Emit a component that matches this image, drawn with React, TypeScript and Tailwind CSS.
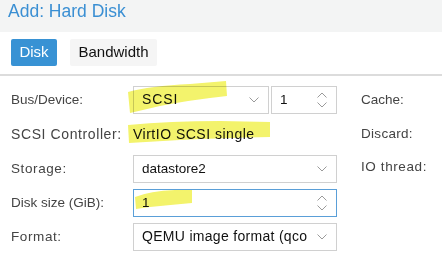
import React from 'react';

const font = { fontFamily: '"Liberation Sans", Arial, sans-serif' };

function Chevron({ up = false }: { up?: boolean }) {
  return (
    <svg width="10" height="6" viewBox="0 0 10 6" className="block shrink-0">
      <path
        d={up ? 'M0.5 5.5 L5 1 L9.5 5.5' : 'M0.5 0.5 L5 5 L9.5 0.5'}
        fill="none"
        stroke="#9a9a9a"
        strokeWidth="1"
      />
    </svg>
  );
}

function Spinner() {
  return (
    <div className="flex shrink-0 flex-col gap-[4px]">
      <Chevron up />
      <Chevron />
    </div>
  );
}

function Label({ children, className = '' }: { children: React.ReactNode; className?: string }) {
  return <div className={`w-[122px] shrink-0 whitespace-nowrap text-[13.5px] text-[#444] ${className}`}>{children}</div>;
}

function Field({
  children,
  width,
  focused = false,
  icon,
}: {
  children?: React.ReactNode;
  width: string;
  focused?: boolean;
  icon: React.ReactNode;
}) {
  return (
    <div
      className={`flex h-full items-center border bg-white pl-[8px] pr-[9px] text-[13.5px] text-[#111] ${width} ${
        focused ? 'border-[#5a9fd8]' : 'border-[#d0d0d0]'
      }`}
    >
      <div className="mr-[10px] min-w-0 flex-1 overflow-hidden whitespace-nowrap">{children}</div>
      {icon}
    </div>
  );
}

export default function App() {
  return (
    <div className="relative h-[255px] w-[442px] overflow-hidden bg-white" style={font}>
      <div className="h-[32px] bg-[#f3f4f4] pl-[8px] pt-[1px] text-[17.5px] leading-[20px] text-[#3a8fd3]">
        Add: Hard Disk
      </div>

      <div className="flex h-[42px] items-start gap-[13px] pl-[11px] pt-[7px]">
        <div className="flex h-[27px] w-[46px] items-center justify-center rounded-[2px] bg-[#3892d4] text-[15px] text-white">
          Disk
        </div>
        <div className="flex h-[27px] w-[87px] items-center justify-center rounded-[2px] bg-[#f5f5f5] text-[15px] text-[#111]">
          Bandwidth
        </div>
      </div>
      <div className="h-[2px] bg-[#dcdcdc]" />

      <div className="flex pl-[11px] pt-[10px]">
        <div className="flex w-[326px] flex-col gap-[6px]">
          <div className="flex h-[28px] items-center">
            <Label>Bus/Device:</Label>
            <Field width="w-[136px]" icon={<Chevron />}>
              <span className="text-[14px] tracking-[0.9px]">SCSI</span>
            </Field>
            <div className="ml-[2px] h-full">
              <Field width="w-[66px]" icon={<Spinner />}>
                1
              </Field>
            </div>
          </div>
          <div className="flex h-[29px] items-center">
            <Label className="text-[14px] tracking-[0.6px]">SCSI Controller:</Label>
            <span className="whitespace-nowrap text-[14px] tracking-[0.5px] text-[#111]">VirtIO SCSI single</span>
          </div>
          <div className="flex h-[28px] items-center">
            <Label className="tracking-[0.6px]">Storage:</Label>
            <Field width="w-[204px]" icon={<Chevron />}>
              datastore2
            </Field>
          </div>
          <div className="flex h-[28px] items-center">
            <Label>Disk size (GiB):</Label>
            <Field width="w-[204px]" focused icon={<Spinner />}>
              1
            </Field>
          </div>
          <div className="flex h-[28px] items-center">
            <Label className="tracking-[0.6px]">Format:</Label>
            <Field width="w-[204px]" icon={<Chevron />}>
              <span className="text-[14px] tracking-[0.3px]">QEMU image format (qcow2)</span>
            </Field>
          </div>
        </div>

        <div className="ml-[24px] flex flex-col gap-[6px] whitespace-nowrap text-[13.5px] text-[#444]">
          <div className="flex h-[28px] items-center">Cache:</div>
          <div className="flex h-[29px] items-center tracking-[0.3px]">Discard:</div>
          <div className="flex h-[24px] items-center tracking-[0.6px]">IO thread:</div>
        </div>
      </div>

      <svg
        className="pointer-events-none absolute left-0 top-0 mix-blend-multiply"
        width="442"
        height="255"
        viewBox="0 0 442 255"
      >
        <g fill="#f2f25c" opacity="0.9">
          <path d="M128 92 Q150 86 190 84 L226 81 L227 96 Q190 100 160 106 L130 113 Z" />
          <path d="M128 125 Q170 121 220 121 L270 122 L270 137 Q220 138 180 140 L129 143 Z" />
          <path d="M135 197 Q150 191 175 190 L192 190 L192 203 Q170 205 150 207 L136 209 Z" />
        </g>
      </svg>
    </div>
  );
}
